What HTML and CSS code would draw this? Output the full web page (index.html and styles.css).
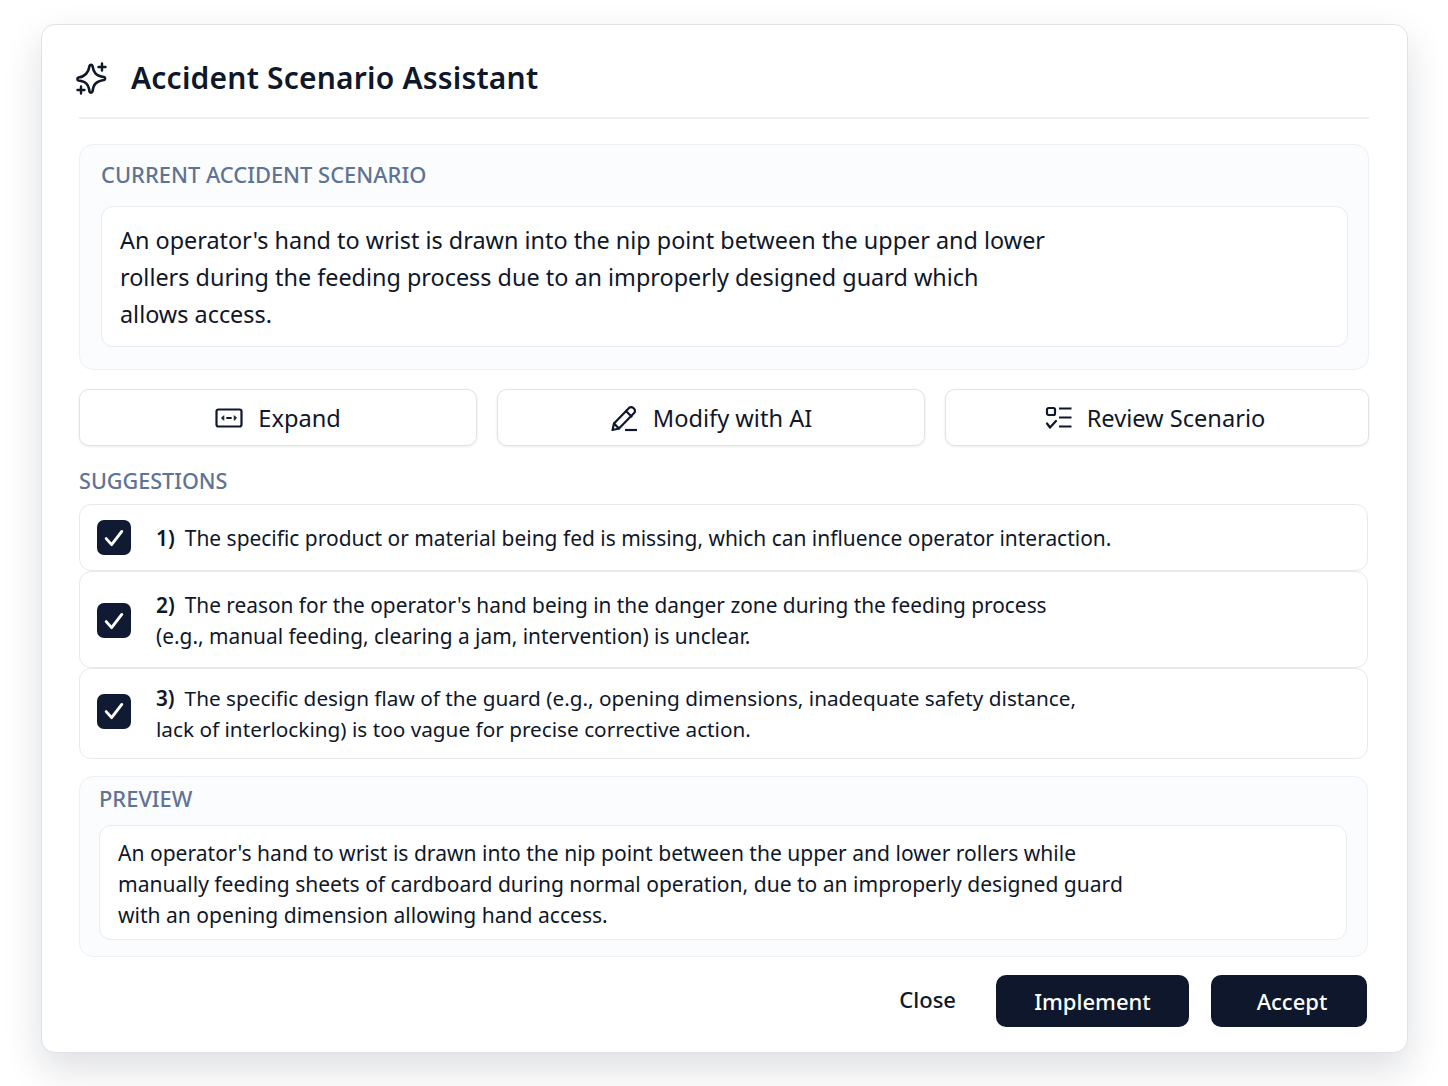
FILE: index.html
```html
<!DOCTYPE html>
<html lang="en">
<head>
<meta charset="utf-8">
<title>Accident Scenario Assistant</title>
<link rel="stylesheet" href="styles.css">
</head>
<body>
<main class="card">
  <header class="head">
    <svg class="spark" viewBox="0 0 34 34" fill="none" stroke="#0f172a" stroke-width="2.600" stroke-linecap="round" stroke-linejoin="round"><path d="M14.500 5c.5-1.500 2.500-1.500 3 0C18.500 11 20.500 15 29 16c1.500.4 1.500 2.500 0 3C21 20.500 18.500 23 17.500 30.500c-.4 1.500-2.500 1.500-3 0C13.500 23 11 20.500 3.500 19.500c-1.500-.4-1.500-2.500 0-3C10.500 15.500 13.500 12 14.500 5z"/><path d="M27 2.500v7M23.500 6h7M6 25.500v7M2.500 29h7" stroke-width="2.400"/></svg>
    <h1>Accident Scenario Assistant</h1>
  </header>
  <section class="panel current">
    <h2 class="label">CURRENT ACCIDENT SCENARIO</h2>
    <p class="box big">An operator's hand to wrist is drawn into the nip point between the upper and lower<br>rollers during the feeding process due to an improperly designed guard which<br>allows access.</p>
  </section>
  <div class="actions">
    <button class="tool"><svg class="ico" viewBox="0 0 28 20" fill="none" stroke="#0f172a" stroke-width="2.200" stroke-linecap="round" stroke-linejoin="round"><rect x="1.500" y="1.500" width="25" height="17" rx="2"/><path d="M12 10h4" stroke-width="1.800"/><path d="M8.500 8l-2 2 2 2zM19.500 8l2 2-2 2z" fill="#0f172a" stroke-width="1"/></svg>Expand</button>
    <button class="tool"><svg class="ico pen" viewBox="0 0 28 28" fill="none" stroke="#0f172a" stroke-width="2.200" stroke-linecap="round" stroke-linejoin="round"><path d="M2.500 26L4 19.500 19 4a3 3 0 0 1 4.300 0l.8.8a3 3 0 0 1 0 4.300L9 24.500z"/><path d="M4 19.500l5 5M16 7l5.500 5.500"/><path d="M15 26h12" stroke-linecap="butt"/></svg>Modify with AI</button>
    <button class="tool review"><svg class="ico list" viewBox="0 0 28 24" fill="none" stroke="#0f172a" stroke-width="2.200" stroke-linecap="round" stroke-linejoin="round"><rect x="2" y="2" width="8" height="7" rx="1.500"/><path d="M2 17.500l3 4 6-6.500"/><path d="M14 2.500h12.500M14 11.500h12.500M14 20.500h12.500" stroke-linecap="butt"/></svg>Review Scenario</button>
  </div>
  <h2 class="label sug">SUGGESTIONS</h2>
  <div class="rows">
    <label class="row one"><span class="check"><svg viewBox="0 0 20 20" fill="none" stroke="#fff" stroke-width="2.400" stroke-linecap="round" stroke-linejoin="round"><path d="M3.500 10.500l4.500 5L16.500 4.500"/></svg></span><span class="txt"><b>1)</b>The specific product or material being fed is missing, which can influence operator interaction.</span></label>
    <label class="row two"><span class="check"><svg viewBox="0 0 20 20" fill="none" stroke="#fff" stroke-width="2.400" stroke-linecap="round" stroke-linejoin="round"><path d="M3.500 10.500l4.500 5L16.500 4.500"/></svg></span><span class="txt"><b>2)</b>The reason for the operator's hand being in the danger zone during the feeding process<br>(e.g., manual feeding, clearing a jam, intervention) is unclear.</span></label>
    <label class="row three"><span class="check"><svg viewBox="0 0 20 20" fill="none" stroke="#fff" stroke-width="2.400" stroke-linecap="round" stroke-linejoin="round"><path d="M3.500 10.500l4.500 5L16.500 4.500"/></svg></span><span class="txt"><b>3)</b>The specific design flaw of the guard (e.g., opening dimensions, inadequate safety distance,<br>lack of interlocking) is too vague for precise corrective action.</span></label>
  </div>
  <section class="panel preview">
    <h2 class="label">PREVIEW</h2>
    <p class="box small">An operator's hand to wrist is drawn into the nip point between the upper and lower rollers while<br>manually feeding sheets of cardboard during normal operation, due to an improperly designed guard<br>with an opening dimension allowing hand access.</p>
  </section>
  <footer class="foot">
    <button class="close">Close</button>
    <button class="primary impl">Implement</button>
    <button class="primary acc">Accept</button>
  </footer>
</main>
</body>
</html>
```
FILE: styles.css
```css
* { box-sizing: border-box; }
html, body { margin: 0; height: 1086px; overflow: hidden; }
body {
  background: #fff;
  font-family: "Noto Sans", "Open Sans", "Liberation Sans", sans-serif;
  color: #0f172a;
  padding: 24px 40px 34px 41px;
}
.card {
  height: 1029px;
  width: 1367px;
  background: #fff;
  border: 1px solid #dfe2e6;
  border-radius: 14px;
  box-shadow: 0 16px 38px rgba(15, 23, 42, 0.14);
  padding: 0 38px 0 37px;
}
.head {
  height: 94px;
  display: flex;
  align-items: center;
  gap: 22px;
  border-bottom: 2px solid #eef0f3;
  padding-top: 14px;
}
.spark { width: 34px; height: 34px; margin-left: -4px; flex: none; }
h1 { margin: 0; font-size: 30px; line-height: 36px; font-weight: 600; letter-spacing: 0.2px; }
.panel {
  background: #fbfcfe;
  border: 1px solid #edf0f4;
  border-radius: 14px;
}
.current { margin-top: 25px; height: 226px; padding: 15px 20px 0 21px; }
.label {
  margin: 0;
  font-size: 21.900px;
  line-height: 30px;
  font-weight: 500;
  color: #5f7394;
}
.box {
  margin: 0;
  background: #fff;
  border: 1px solid #e8ebf0;
  border-radius: 12px;
}
.big { margin-top: 16px; height: 141px; padding: 15px 18px; font-size: 23.400px; line-height: 37px; }
.actions {
  display: grid;
  grid-template-columns: 398fr 428fr 424fr;
  gap: 20px;
  margin-top: 19px;
}
.tool {
  height: 57px;
  display: flex;
  align-items: center;
  justify-content: center;
  gap: 15px;
  background: #fff;
  border: 1px solid #dfe3e8;
  border-radius: 10px;
  box-shadow: 0 1px 3px rgba(15, 23, 42, 0.08);
  font: inherit;
  font-size: 23.600px;
  color: #0f172a;
}
.tool.review { padding-right: 10px; gap: 14px; }
.ico { width: 28px; height: 20px; flex: none; }
.ico.pen { width: 28px; height: 28px; }
.ico.list { width: 28px; height: 24px; }
.sug { margin-top: 20px; font-size: 21.600px; }
.rows { margin-top: 8px; display: flex; flex-direction: column; }
.row {
  display: flex;
  align-items: center;
  gap: 25px;
  background: #fff;
  border: 1px solid #e6e9ee;
  border-radius: 12px;
  padding-left: 17px;
  font-size: 20.950px;
  line-height: 31px;
  margin-right: 1px;
}
.row.one { height: 67px; }
.row.two { height: 97px; font-size: 20.850px; }
.row.three { height: 91px; font-size: 20.750px; }
.row.one .txt { margin-top: 2px; }
.row.two .txt { margin-top: 3px; }
.row.two .check { margin-top: 2px; }
.row.three .check { margin-top: -5px; }
.row b { font-weight: 600; margin-right: 10px; }
.check {
  width: 34px;
  height: 35px;
  flex: none;
  border-radius: 7px;
  background: #111a33;
  display: flex;
  align-items: center;
  justify-content: center;
}
.check svg { width: 24px; height: 24px; }
.preview { margin-top: 17px; margin-right: 1px; height: 181px; padding: 7px 20px 0 19px; }
.small { margin-top: 11px; height: 115px; padding: 11px 18px; font-size: 21.050px; line-height: 31px; }
.foot { display: flex; align-items: center; margin-top: 18px; margin-right: 2px; justify-content: flex-end; }
.foot button { font: inherit; font-size: 22px; font-weight: 500; height: 52px; border-radius: 10px; border: 0; padding: 0; }
.foot .close { background: transparent; color: #0f172a; margin-right: 40px; padding-bottom: 4px; }
.primary { background: #0e172b; color: #fff; }
.impl { width: 193px; margin-right: 22px; }
.foot .acc { width: 156px; padding-left: 6px; }
```
